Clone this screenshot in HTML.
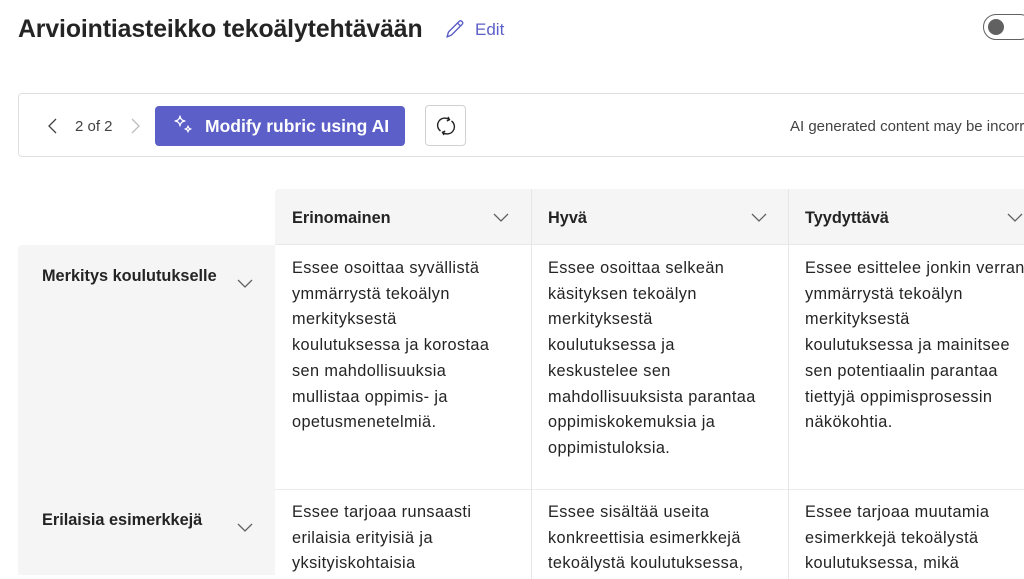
<!DOCTYPE html>
<html><head><meta charset="utf-8"><style>
*{margin:0;padding:0;box-sizing:border-box}
body{width:1024px;height:571px;overflow:hidden;background:#fff;font-family:"Liberation Sans",sans-serif;color:#242424;position:relative}
.a{position:absolute}
.t{font-size:16.3px;letter-spacing:0.4px;line-height:25.7px;color:#242424;white-space:nowrap}
.h{font-size:16.3px;font-weight:600;color:#242424}
</style></head><body>
<div class="a" style="left:18px;top:16px;font-size:24.8px;font-weight:600;letter-spacing:-0.1px">Arviointiasteikko tekoälytehtävään</div>
<svg class="a" style="left:444px;top:18px" width="22" height="22" viewBox="0 0 22 22"><path d="M3 19 L4.5 14 L15 3.5 Q16.5 2 18 3.5 Q19.5 5 18 6.5 L7.5 17 Z M13.5 5 L16.5 8" fill="none" stroke="#5b5fc7" stroke-width="1.4" stroke-linejoin="round"/></svg>
<div class="a" style="left:475px;top:20px;font-size:17px;color:#5b5fc7">Edit</div>
<div class="a" style="left:983px;top:14px;width:50px;height:26px;border:1.5px solid #616161;border-radius:13px"></div>
<div class="a" style="left:988px;top:19px;width:16px;height:16px;border-radius:50%;background:#616161"></div>

<div class="a" style="left:18px;top:93px;width:1020px;height:64px;border:1px solid #e0e0e0;border-radius:4px"></div>
<svg class="a" style="left:46px;top:117px" width="14" height="18"><path d="M10 2 L3 9 L10 16" fill="none" stroke="#424242" stroke-width="1.3"/></svg>
<div class="a" style="left:75px;top:118px;font-size:15px;color:#424242">2 of 2</div>
<svg class="a" style="left:128px;top:117px" width="14" height="18"><path d="M4 2 L11 9 L4 16" fill="none" stroke="#bdbdbd" stroke-width="1.3"/></svg>
<div class="a" style="left:155px;top:106px;width:250px;height:40px;background:#5b5fc7;border-radius:4px"></div>
<svg class="a" style="left:173px;top:114px" width="22" height="22" viewBox="0 0 22 22"><path d="M7 2 Q7.5 6.5 12 7 Q7.5 7.5 7 12 Q6.5 7.5 2 7 Q6.5 6.5 7 2Z M15 12 Q15.3 14.7 18 15 Q15.3 15.3 15 18 Q14.7 15.3 12 15 Q14.7 14.7 15 12Z" fill="none" stroke="#fff" stroke-width="1.2" stroke-linejoin="round"/></svg>
<div class="a" style="left:205px;top:116px;font-size:17.5px;font-weight:600;color:#fff">Modify rubric using AI</div>
<div class="a" style="left:425px;top:105px;width:41px;height:41px;border:1px solid #d1d1d1;border-radius:4px"></div>
<svg class="a" style="left:434px;top:114px" width="24" height="24" viewBox="0 0 24 24"><path d="M15 5.5 A7 7 0 0 0 6.5 17 M9 18.5 A7 7 0 0 0 17.5 7" fill="none" stroke="#242424" stroke-width="1.4"/><path d="M14 3 L15.5 5.7 L12.8 7 M10 21 L8.5 18.3 L11.2 17" fill="none" stroke="#242424" stroke-width="1.4"/></svg>
<div class="a" style="left:790px;top:118px;font-size:15px;color:#424242;white-space:nowrap">AI generated content may be incorrect</div>

<div class="a" style="left:275px;top:189px;width:760px;height:56px;background:#f5f5f5;border-radius:4px 0 0 0;border-bottom:1px solid #e8e8e8"></div>
<div class="a" style="left:18px;top:245px;width:257px;height:330px;background:#f5f5f5;border-radius:4px 0 0 0"></div>
<div class="a" style="left:531px;top:189px;width:1px;height:390px;background:#e6e6e6"></div>
<div class="a" style="left:788px;top:189px;width:1px;height:390px;background:#e6e6e6"></div>
<div class="a" style="left:275px;top:489px;width:760px;height:1px;background:#ebebeb"></div>

<div class="a h" style="left:292px;top:209px">Erinomainen</div>
<div class="a h" style="left:548px;top:209px">Hyvä</div>
<div class="a h" style="left:805px;top:209px">Tyydyttävä</div>
<svg class="a" style="left:492px;top:211px" width="18" height="12"><path d="M2 3 L9 10 L16 3" fill="none" stroke="#616161" stroke-width="1.3"/></svg>
<svg class="a" style="left:750px;top:211px" width="18" height="12"><path d="M2 3 L9 10 L16 3" fill="none" stroke="#616161" stroke-width="1.3"/></svg>
<svg class="a" style="left:1006px;top:211px" width="18" height="12"><path d="M2 3 L9 10 L16 3" fill="none" stroke="#616161" stroke-width="1.3"/></svg>

<div class="a h" style="left:42px;top:267px">Merkitys koulutukselle</div>
<svg class="a" style="left:236px;top:277px" width="18" height="12"><path d="M2 3 L9 10 L16 3" fill="none" stroke="#616161" stroke-width="1.3"/></svg>
<div class="a h" style="left:42px;top:511px">Erilaisia esimerkkejä</div>
<svg class="a" style="left:236px;top:521px" width="18" height="12"><path d="M2 3 L9 10 L16 3" fill="none" stroke="#616161" stroke-width="1.3"/></svg>

<div class="a t" style="left:292px;top:256px">Essee osoittaa syvällistä<br>ymmärrystä tekoälyn<br>merkityksestä<br>koulutuksessa ja korostaa<br>sen mahdollisuuksia<br>mullistaa oppimis- ja<br>opetusmenetelmiä.</div>
<div class="a t" style="left:548px;top:256px">Essee osoittaa selkeän<br>käsityksen tekoälyn<br>merkityksestä<br>koulutuksessa ja<br>keskustelee sen<br>mahdollisuuksista parantaa<br>oppimiskokemuksia ja<br>oppimistuloksia.</div>
<div class="a t" style="left:805px;top:256px">Essee esittelee jonkin verran<br>ymmärrystä tekoälyn<br>merkityksestä<br>koulutuksessa ja mainitsee<br>sen potentiaalin parantaa<br>tiettyjä oppimisprosessin<br>näkökohtia.</div>

<div class="a t" style="left:292px;top:500px">Essee tarjoaa runsaasti<br>erilaisia erityisiä ja<br>yksityiskohtaisia</div>
<div class="a t" style="left:548px;top:500px">Essee sisältää useita<br>konkreettisia esimerkkejä<br>tekoälystä koulutuksessa,</div>
<div class="a t" style="left:805px;top:500px">Essee tarjoaa muutamia<br>esimerkkejä tekoälystä<br>koulutuksessa, mikä</div>
</body></html>
